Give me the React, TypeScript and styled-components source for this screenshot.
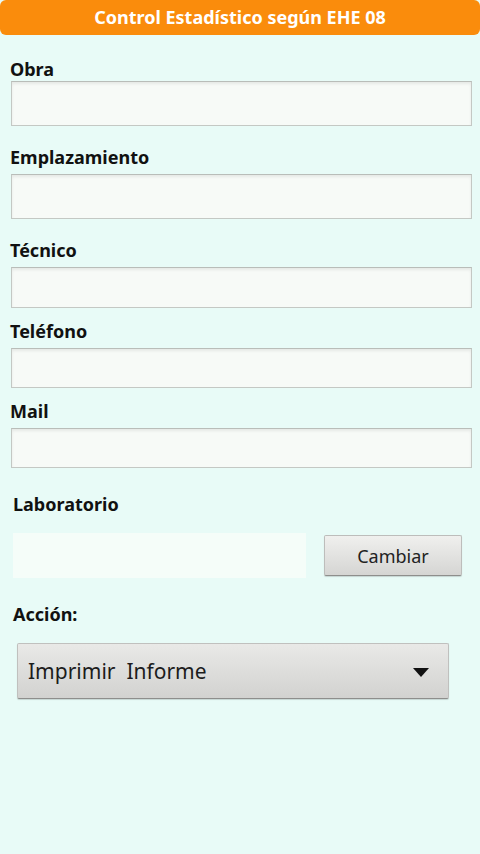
import React from "react";
import styled, { createGlobalStyle } from "styled-components";

const Global = createGlobalStyle`
  html, body { margin: 0; padding: 0; background: #e8fbf7; }
  body { font-family: "Noto Sans", "Open Sans", "DejaVu Sans", sans-serif; }
  #root { min-height: 854px; background: #e8fbf7; }
  * { box-sizing: border-box; }
`;

const Screen = styled.div`
  width: 480px;
  min-height: 854px;
  background: #e8fbf7;
  display: flex;
  flex-direction: column;
`;

const Header = styled.header`
  height: 35px;
  background: #fa8c0c;
  border-radius: 6px;
  color: #fff;
  font-weight: 700;
  font-size: 18px;
  line-height: 35px;
  text-align: center;
`;

const Form = styled.div`
  display: flex;
  flex-direction: column;
  padding: 0 8px 0 10px;
`;

const Label = styled.div<{ $top: number; $indent?: number }>`
  margin-top: ${(p) => p.$top}px;
  margin-left: ${(p) => p.$indent ?? 0}px;
  font-size: 18px;
  line-height: 20px;
  font-weight: 700;
  color: #111;
`;

const TextInput = styled.div<{ $gap: number; $h: number }>`
  margin-top: ${(p) => p.$gap}px;
  margin-left: 1px;
  width: 461px;
  height: ${(p) => p.$h}px;
  background: #f7faf7;
  border: 1px solid #c4c8c4;
  border-top-color: #b9bdb9;
  box-shadow: inset 0 2px 3px rgba(0, 0, 0, 0.07);
`;

const LabRow = styled.div`
  margin-top: 19px;
  padding-left: 3px;
  display: flex;
  align-items: flex-start;
  gap: 18px;
`;

const LabField = styled.div`
  width: 293px;
  height: 45px;
  background: #f5fdf9;
`;

const Button = styled.button`
  margin-top: 2px;
  width: 138px;
  height: 41px;
  border: 1px solid #bdbdbb;
  border-bottom-color: #8e8e8c;
  border-radius: 2px;
  background: linear-gradient(#f0f0ee, #d5d5d3);
  box-shadow: 0 1px 1px rgba(0, 0, 0, 0.15);
  font-family: "Noto Sans", "Open Sans", sans-serif;
  font-size: 18px;
  color: #222;
  padding: 0;
`;

const Select = styled.div`
  margin-top: 19px;
  margin-left: 7px;
  width: 432px;
  height: 56px;
  display: flex;
  align-items: center;
  justify-content: space-between;
  padding: 0 19px 0 10px;
  border: 1px solid #c0c0be;
  border-bottom-color: #8e8e8c;
  border-radius: 2px;
  background: linear-gradient(#e9e9e7, #d2d2d0);
  box-shadow: 0 1px 1px rgba(0, 0, 0, 0.15);
  font-size: 21px;
  color: #1c1c1c;
`;

const SelectText = styled.span`
  white-space: pre;
`;

const Caret = styled.svg`
  width: 16px;
  height: 9px;
  margin-top: 3px;
`;

const fields = [
  { label: "Obra", top: 24, gap: 2, h: 45 },
  { label: "Emplazamiento", top: 21, gap: 7, h: 45 },
  { label: "Técnico", top: 21, gap: 7, h: 41 },
  { label: "Teléfono", top: 13, gap: 7, h: 40 },
  { label: "Mail", top: 13, gap: 7, h: 40 },
];

export default function App() {
  return (
    <Screen>
      <Global />
      <Header>Control Estadístico según EHE 08</Header>
      <Form>
        {fields.map((f) => (
          <React.Fragment key={f.label}>
            <Label $top={f.top}>{f.label}</Label>
            <TextInput $gap={f.gap} $h={f.h} />
          </React.Fragment>
        ))}
        <Label $top={26} $indent={3}>Laboratorio</Label>
        <LabRow>
          <LabField />
          <Button>Cambiar</Button>
        </LabRow>
        <Label $top={26} $indent={3}>Acción:</Label>
        <Select>
          <SelectText>Imprimir  Informe</SelectText>
          <Caret viewBox="0 0 16 9">
            <path d="M0 0 H16 L8 9 Z" fill="#111" />
          </Caret>
        </Select>
      </Form>
    </Screen>
  );
}
